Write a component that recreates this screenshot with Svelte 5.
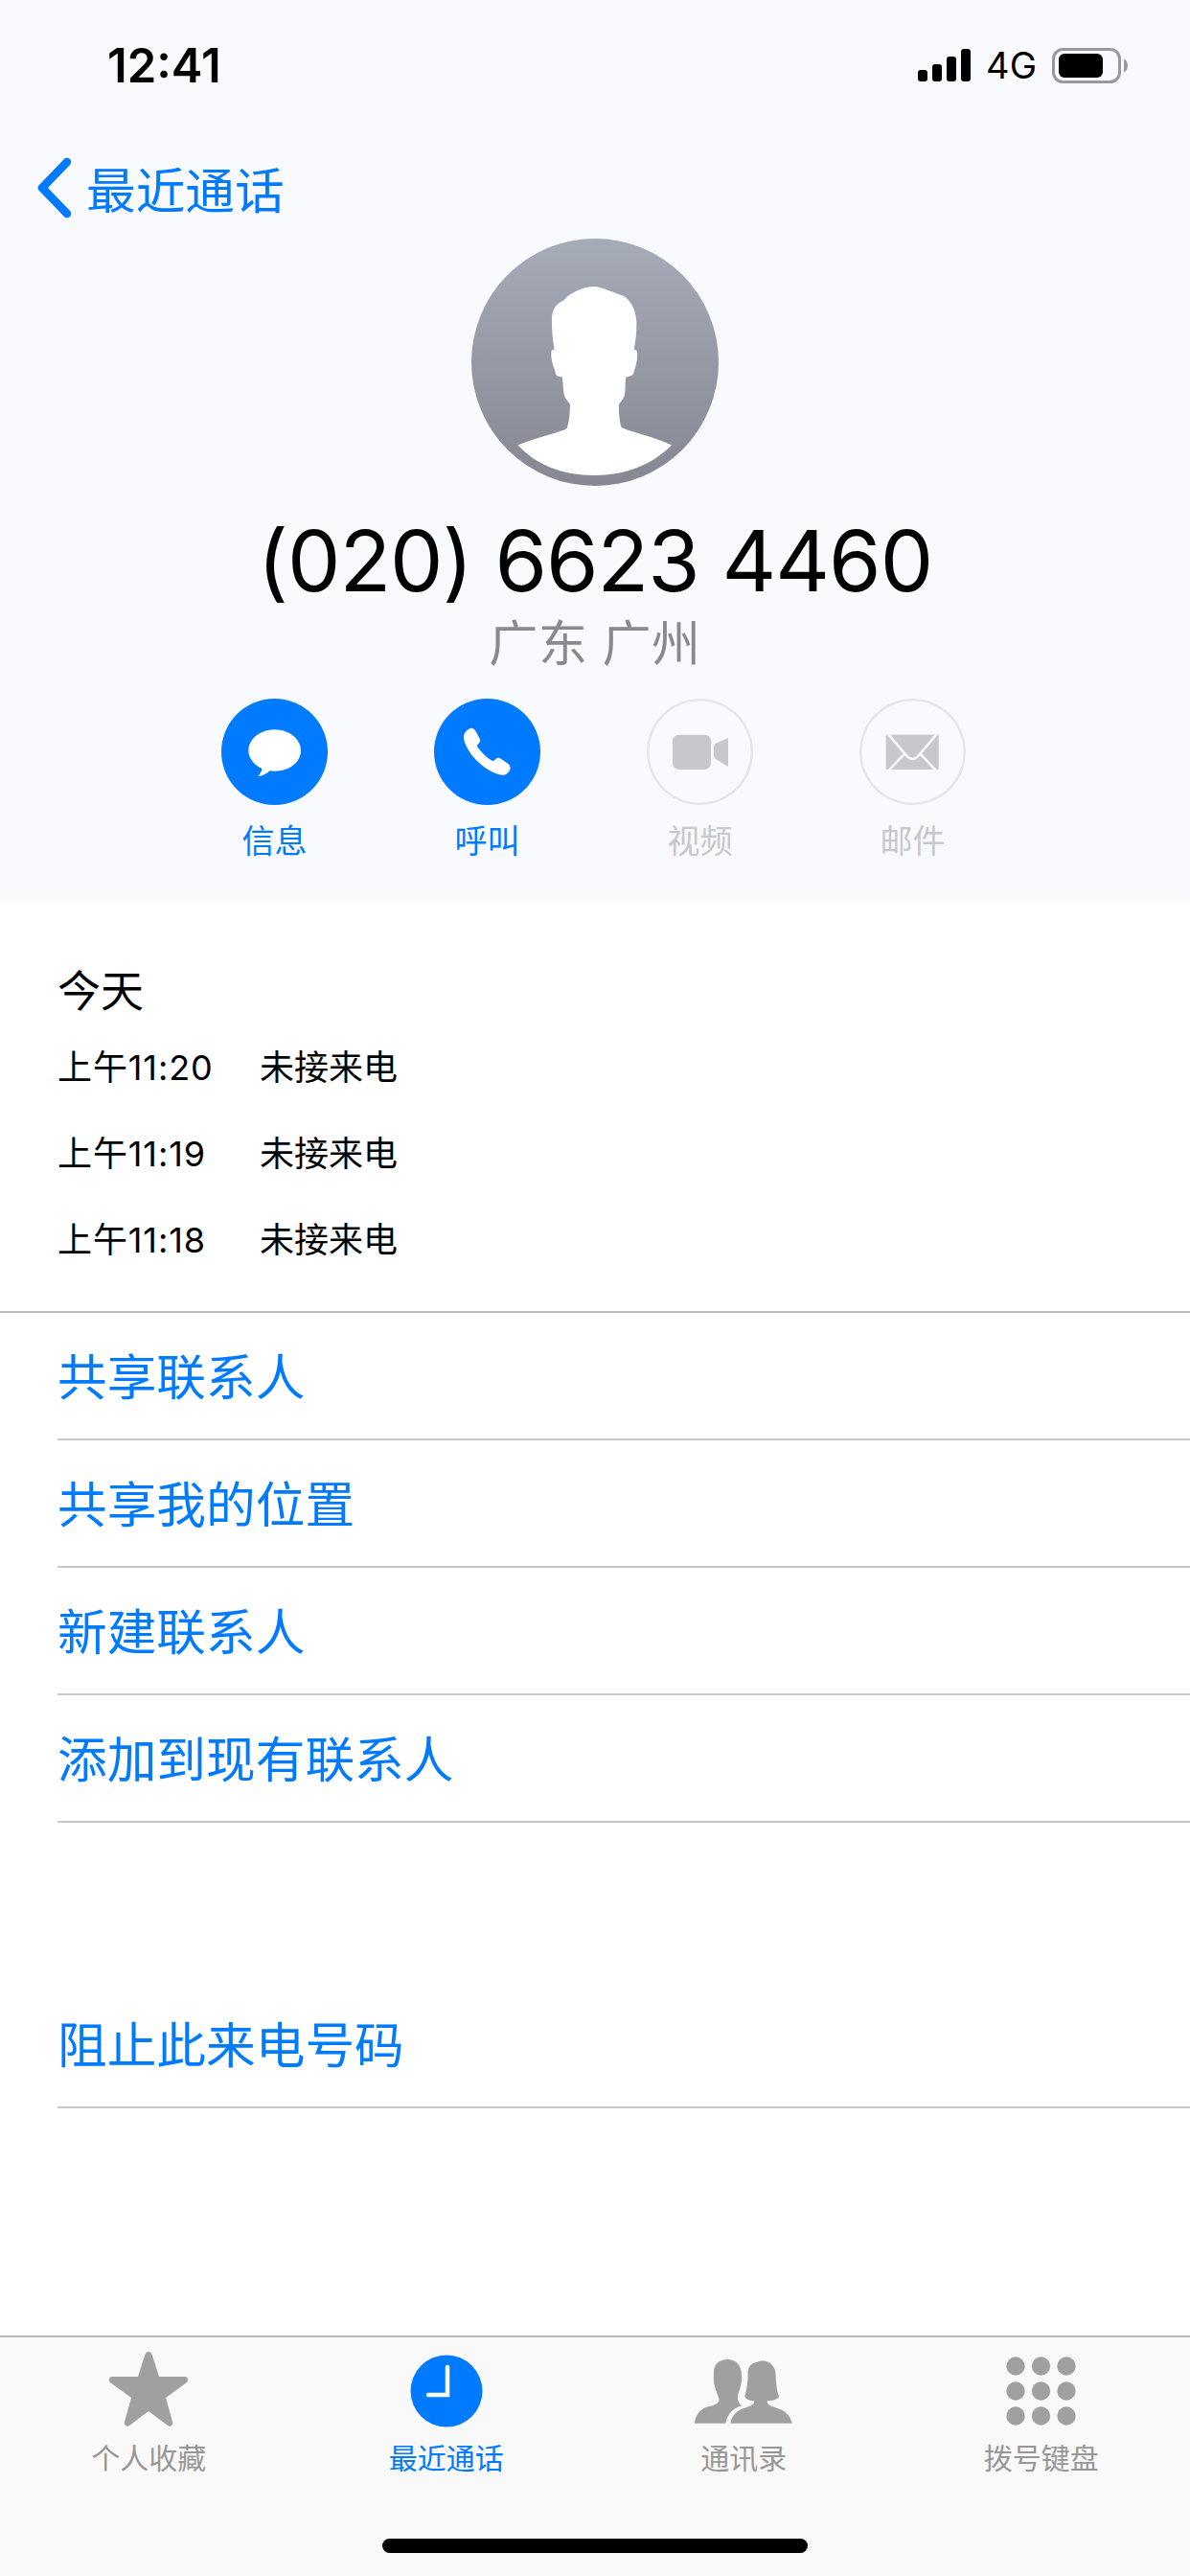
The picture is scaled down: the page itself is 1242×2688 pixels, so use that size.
<script>
  const actions = [
    { label: '信息', icon: 'message', on: true },
    { label: '呼叫', icon: 'phone', on: true },
    { label: '视频', icon: 'video', on: false },
    { label: '邮件', icon: 'mail', on: false }
  ];
  const calls = ['上午11:20', '上午11:19', '上午11:18'];
  const links = ['共享联系人', '共享我的位置', '新建联系人', '添加到现有联系人'];
  const tabs = [
    { label: '个人收藏', icon: 'star' },
    { label: '最近通话', icon: 'clock', active: true },
    { label: '通讯录', icon: 'contacts' },
    { label: '拨号键盘', icon: 'keypad' }
  ];
  const keys = [];
  for (let r = 0; r < 3; r++) {
    for (let c = 0; c < 3; c++) keys.push({ x: 10 + c * 26.5, y: 10 + r * 26 });
  }
</script>

<div class="page">
  <header class="top">
    <div class="status">
      <span class="time">12:41</span>
      <div class="status-right">
        <svg class="signal" viewBox="0 0 55 34" width="55" height="34">
          <rect x="0" y="22" width="10" height="12" rx="3" />
          <rect x="15" y="16" width="10" height="18" rx="3" />
          <rect x="30" y="8" width="10" height="26" rx="3" />
          <rect x="45" y="0" width="10" height="34" rx="3" />
        </svg>
        <span class="net">4G</span>
        <svg class="battery" viewBox="0 0 79 37" width="79" height="37">
          <rect x="1.5" y="1.5" width="69" height="34" rx="10" fill="none" stroke="#99989d" stroke-width="3" />
          <rect x="7" y="6" width="46" height="25" rx="6" fill="#000" />
          <path d="M75 11.5c3 1.5 4 4 4 7s-1 5.500-4 7z" fill="#99989d" />
        </svg>
      </div>
    </div>

    <div class="nav">
      <svg class="chevron" viewBox="0 0 38 64" width="38" height="64">
        <path d="M33 5 7 32l26 27" fill="none" stroke="#007aff" stroke-width="8.500" stroke-linecap="round" stroke-linejoin="round" />
      </svg>
      <span>最近通话</span>
    </div>

    <div class="avatar">
      <svg viewBox="157 57 772 773" width="258" height="258">
        <path fill="#fff" d="M540 207C560 207 590 222 630 235C650 245 672 275 673 320C673 350 670 380 665 403L672 405C680 420 672 450 666 470C664 485 655 488 640 490C636 510 640 545 632 555L618 575C617 600 620 630 625 645C640 660 720 672 783 703C720 765 640 797 540 797C440 797 360 765 302 703C350 680 430 665 455 650C462 630 465 600 465 575L450 555C442 540 445 510 440 490C425 488 420 488 418 470C410 450 402 420 408 405L416 403C410 370 408 340 408 310C408 280 420 260 445 250C465 225 510 207 540 207Z" />
      </svg>
    </div>

    <h1>(020) 6623 4460</h1>
    <p class="place">广东 广州</p>

    <div class="actions">
      {#each actions as a}
        <div class="action" class:on={a.on}>
          <div class="circle">
            {#if a.icon === 'message'}
              <svg viewBox="3 15 333 333" width="111" height="111">
                <path fill="#fff" d="M170 112C215 112 252 140 252 177C252 215 215 242 170 242C165 242 160 242 155 241C145 250 130 258 118 258C125 250 130 243 130 234C105 222 88 202 88 177C88 140 125 112 170 112Z" />
              </svg>
            {:else if a.icon === 'phone'}
              <svg viewBox="669 15 333 333" width="111" height="111">
                <path fill="#fff" d="M783 108C790 106 795 110 800 118L812 140C816 148 812 152 806 158C803 162 804 165 808 170C820 186 835 200 848 208C853 211 856 210 860 206C866 200 870 198 878 203L900 218C908 224 910 232 906 240C900 250 893 255 882 254C850 250 815 225 790 195C772 172 762 150 762 135C762 122 772 112 783 108Z" />
              </svg>
            {:else if a.icon === 'video'}
              <svg viewBox="15 15 333 333" width="111" height="111">
                <rect x="96" y="128" width="120" height="109" rx="20" fill="#c7c7cc" />
                <path fill="#c7c7cc" d="M225 164Q225 159 229 156L270 138V228L232 205Q225 200 225 194Z" />
              </svg>
            {:else}
              <svg viewBox="682 15 333 333" width="111" height="111">
                <rect x="765" y="128" width="165" height="109" fill="#c7c7cc" />
                <path d="M770 124 828 192Q848 216 868 192L926 124M772 242 821 190M923 242 875 190" fill="none" stroke="#f9fafe" stroke-width="8" />
              </svg>
            {/if}
          </div>
          <span>{a.label}</span>
        </div>
      {/each}
    </div>
  </header>

  <section class="recent">
    <div class="today">今天</div>
    {#each calls as c}
      <div class="call">
        <span class="when">{c}</span>
        <span class="what">未接来电</span>
      </div>
    {/each}
  </section>

  <section class="links">
    {#each links as l}
      <div class="link">{l}</div>
    {/each}
  </section>

  <section class="links block">
    <div class="link">阻止此来电号码</div>
  </section>

  <nav class="tabbar">
    <div class="tabs">
      {#each tabs as t}
        <div class="tab" class:active={t.active}>
          <div class="tab-icon">
            {#if t.icon === 'star'}
              <svg class="star" viewBox="0 0 82 78" width="82" height="78">
                <path fill="#a0a0a0" d="M41 0c2 0 3 1.500 4 4l7 22h27c3 0 4 4 2 6L59 48l7 25c1 4-3 6-5 4L41 62 21 77c-2 2-6 0-5-4l7-25L1 32c-2-2-1-6 2-6h27l7-22c1-2.500 2-4 4-4Z" />
              </svg>
            {:else if t.icon === 'clock'}
              <svg viewBox="0 0 76 76" width="76" height="76">
                <circle cx="38" cy="38" r="37.500" fill="#007aff" />
                <path d="M39 13v29H19" fill="none" stroke="#fff" stroke-width="4.500" stroke-linecap="round" />
              </svg>
            {:else if t.icon === 'contacts'}
              <svg viewBox="18 35 306 201" width="102" height="67">
                <path fill="#a0a0a0" d="M18 235C20 210 35 190 60 183C80 178 92 175 95 160C92 150 85 135 80 115C76 100 78 90 78 75C78 50 95 35 122 35C150 35 165 55 165 85C168 105 160 125 155 140C150 155 152 170 165 180C140 187 120 205 115 235Z" />
                <path fill="#a0a0a0" d="M130 235C133 212 150 195 172 188C190 182 205 178 205 165C190 165 178 160 175 150C182 130 185 100 185 75C186 55 198 47 210 45C220 40 235 38 245 42C262 48 272 65 272 85C273 110 275 135 283 152C275 162 258 165 245 165C245 178 258 182 275 187C300 193 318 210 323 235Z" />
              </svg>
            {:else}
              <svg viewBox="0 0 73 72" width="73" height="72">
                {#each keys as k}
                  <circle cx={k.x} cy={k.y} r="9.700" fill="#a0a0a0" />
                {/each}
              </svg>
            {/if}
          </div>
          <span>{t.label}</span>
        </div>
      {/each}
    </div>
    <div class="home"></div>
  </nav>
</div>

<style>
  :global(body) {
    margin: 0;
    background: #fff;
  }

  .page {
    position: relative;
    width: 1242px;
    height: 2688px;
    display: flex;
    flex-direction: column;
    font-family: "Inter", "Noto Sans CJK SC", sans-serif;
    color: #000;
    overflow: hidden;
  }

  .top {
    height: 942px;
    flex: none;
    background: #f9fafe;
    box-sizing: border-box;
    display: flex;
    flex-direction: column;
    align-items: center;
  }

  .status {
    align-self: stretch;
    height: 44px;
    margin-top: 46px;
    padding: 0 65px 0 112px;
    display: flex;
    justify-content: space-between;
    align-items: center;
  }

  .time {
    font-size: 49px;
    font-weight: 600;
  }

  .status-right {
    display: flex;
    align-items: center;
    gap: 16px;
  }

  .net {
    font-size: 38px;
    font-weight: 400;
  }

  .nav {
    align-self: stretch;
    height: 64px;
    margin-top: 74px;
    padding-left: 37px;
    display: flex;
    align-items: center;
    gap: 15px;
    font-size: 51.7px;
    color: #007aff;
  }

  .nav span {
    padding-bottom: 2px;
  }

  .avatar {
    width: 258px;
    height: 258px;
    margin-top: 21px;
    flex: none;
    border-radius: 50%;
    background: linear-gradient(#a6abb8, #858892);
  }

  .avatar svg {
    display: block;
  }

  h1 {
    margin: 32px 0 0;
    font-size: 88px;
    line-height: 92px;
    font-weight: 400;
    letter-spacing: -1px;
  }

  .place {
    margin: 11px 0 0;
    font-size: 51px;
    line-height: 60px;
    color: #8a8a8e;
    letter-spacing: 0.6px;
  }

  .actions {
    display: grid;
    grid-template-columns: repeat(4, 222px);
    margin: 27px 0 0 -3px;
  }

  .action {
    display: flex;
    flex-direction: column;
    align-items: center;
    gap: 16px;
    font-size: 34px;
    line-height: 44px;
    color: #c7c7cc;
  }

  .action.on {
    color: #007aff;
  }

  .circle {
    width: 111px;
    height: 111px;
    box-sizing: border-box;
    border-radius: 50%;
    box-shadow: inset 0 0 0 2.5px #e5e5ea;
  }

  .circle svg {
    display: block;
  }

  .action.on .circle {
    box-shadow: none;
    background: #007aff;
  }

  .recent {
    height: 428px;
    flex: none;
    box-sizing: border-box;
    padding: 68px 0 0 60px;
    border-bottom: 2px solid #bcbcbc;
  }

  .today {
    font-size: 45px;
    line-height: 50px;
  }

  .call {
    display: flex;
    height: 90px;
    align-items: center;
    font-size: 36px;
  }

  .today + .call {
    margin-top: 6px;
  }

  .when {
    width: 211px;
    font-weight: 400;
    letter-spacing: 0.9px;
  }

  .links {
    padding-left: 60px;
  }

  .link {
    height: 133px;
    box-sizing: border-box;
    padding-bottom: 4px;
    border-bottom: 2px solid #c8c8c8;
    display: flex;
    align-items: center;
    font-size: 51.7px;
    color: #007aff;
  }

  .block {
    margin-top: 165px;
  }

  .tabbar {
    position: absolute;
    top: 2437px;
    left: 0;
    width: 1242px;
    height: 251px;
    box-sizing: border-box;
    background: #f9f9f9;
    border-top: 2px solid #b9b9b9;
  }

  .tabs {
    display: grid;
    grid-template-columns: repeat(4, 1fr);
    padding-top: 14px;
  }

  .tab {
    display: flex;
    flex-direction: column;
    align-items: center;
    font-size: 30px;
    line-height: 40px;
    color: #979797;
  }

  .tab.active {
    color: #007aff;
  }

  .tab-icon {
    height: 84px;
    display: flex;
    align-items: center;
    margin-bottom: 8px;
  }

  .star {
    margin-top: -4px;
  }

  .home {
    width: 444px;
    height: 15px;
    border-radius: 8px;
    background: #000;
    margin: 64px auto 0;
  }
</style>
